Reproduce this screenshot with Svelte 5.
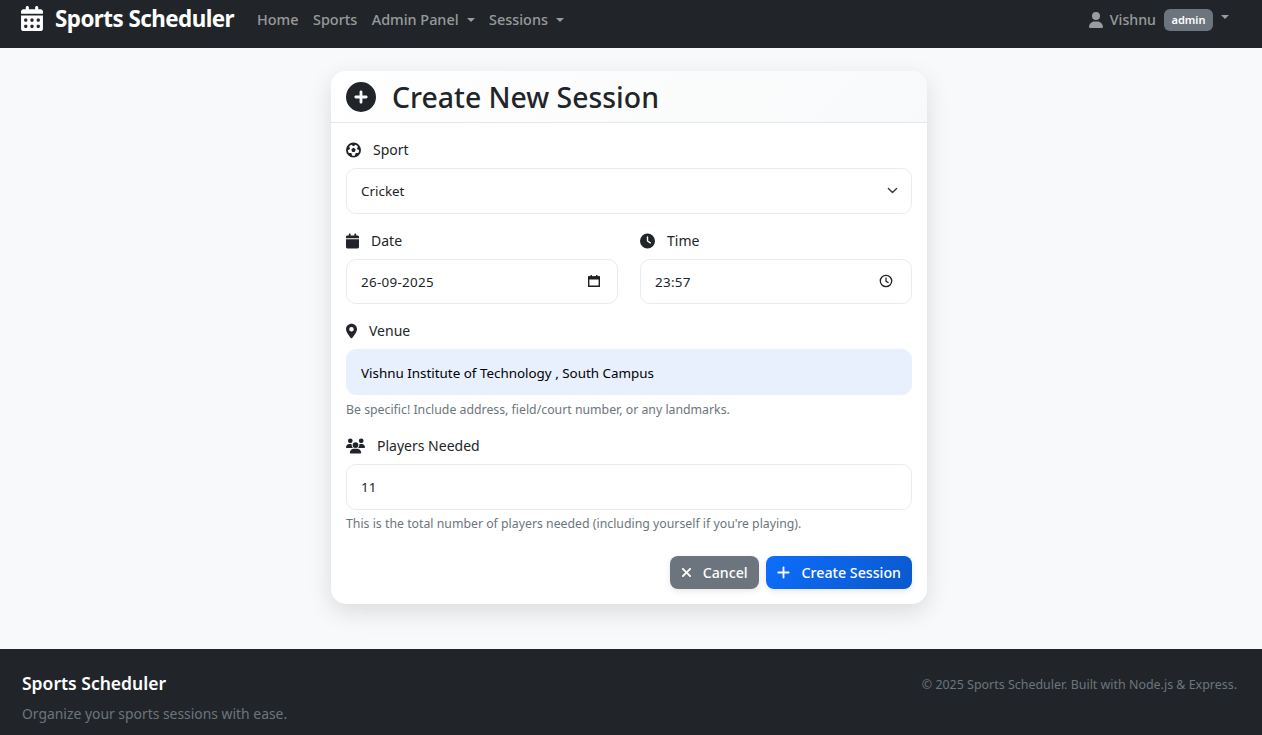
<script>
	let sport = $state('Cricket');
	let date = $state('26-09-2025');
	let time = $state('23:57');
	let venue = $state('Vishnu Institute of Technology , South Campus');
	let players = $state('11');

	const icons = {
		calendarDays: ['0 0 448 512', 'M128 0c17.7 0 32 14.3 32 32V64H288V32c0-17.7 14.3-32 32-32s32 14.3 32 32V64h48c26.5 0 48 21.5 48 48v48H0V112C0 85.5 21.5 64 48 64H96V32c0-17.7 14.3-32 32-32zM0 192H448V464c0 26.5-21.5 48-48 48H48c-26.5 0-48-21.5-48-48V192zm64 80v32c0 8.8 7.2 16 16 16h32c8.8 0 16-7.2 16-16V272c0-8.8-7.2-16-16-16H80c-8.8 0-16 7.2-16 16zm128 0v32c0 8.8 7.2 16 16 16h32c8.8 0 16-7.2 16-16V272c0-8.8-7.2-16-16-16H208c-8.8 0-16 7.2-16 16zm144-16c-8.8 0-16 7.2-16 16v32c0 8.8 7.2 16 16 16h32c8.8 0 16-7.2 16-16V272c0-8.8-7.2-16-16-16H336zM64 400v32c0 8.8 7.2 16 16 16h32c8.8 0 16-7.2 16-16V400c0-8.8-7.2-16-16-16H80c-8.8 0-16 7.2-16 16zm144-16c-8.8 0-16 7.2-16 16v32c0 8.8 7.2 16 16 16h32c8.8 0 16-7.2 16-16V400c0-8.8-7.2-16-16-16H208zm112 16v32c0 8.8 7.2 16 16 16h32c8.8 0 16-7.2 16-16V400c0-8.8-7.2-16-16-16H336c-8.8 0-16 7.2-16 16z'],
		calendar: ['0 0 448 512', 'M96 32V64H48C21.5 64 0 85.5 0 112v48H448V112c0-26.5-21.5-48-48-48H352V32c0-17.7-14.3-32-32-32s-32 14.3-32 32V64H160V32c0-17.7-14.3-32-32-32S96 14.3 96 32zM448 192H0V464c0 26.5 21.5 48 48 48H400c26.5 0 48-21.5 48-48V192z'],
		circlePlus: ['0 0 512 512', 'M256 512A256 256 0 1 0 256 0a256 256 0 1 0 0 512zM232 344V280H168c-13.3 0-24-10.7-24-24s10.7-24 24-24h64V168c0-13.3 10.7-24 24-24s24 10.7 24 24v64h64c13.3 0 24 10.7 24 24s-10.7 24-24 24H280v64c0 13.3-10.7 24-24 24s-24-10.7-24-24z'],
		user: ['0 0 448 512', 'M224 256A128 128 0 1 0 224 0a128 128 0 1 0 0 256zm-45.7 48C79.8 304 0 383.8 0 482.3C0 498.7 13.3 512 29.7 512H418.3c16.4 0 29.7-13.3 29.7-29.7C448 383.8 368.2 304 269.7 304H178.3z'],
		futbol: ['0 0 512 512', 'M417.3 360.1l-71.6-4.8c-5.2-.3-10.3 1.1-14.5 4.2s-7.2 7.4-8.4 12.5l-17.6 69.6C289.5 445.8 273 448 256 448s-33.5-2.2-49.2-6.4L189.2 372c-1.3-5-4.3-9.4-8.4-12.5s-9.3-4.5-14.5-4.2l-71.6 4.8c-17.6-27.2-28.5-59.2-30.4-93.6L125 228.3c4.4-2.8 7.6-7 9.2-11.9s1.4-10.2-.5-15l-26.7-66.6C128 109.2 155.3 89 186.7 76.9l55.2 46c4 3.3 9 5.1 14.1 5.1s10.2-1.8 14.1-5.1l55.2-46c31.3 12.1 58.7 32.3 79.6 57.9l-26.7 66.6c-1.9 4.8-2.1 10.1-.5 15s4.9 9.1 9.2 11.9l60.7 38.2c-1.9 34.4-12.8 66.4-30.4 93.6zM256 512A256 256 0 1 0 256 0a256 256 0 1 0 0 512zm14.1-325.7c-8.4-6.1-19.8-6.1-28.2 0L194 221c-8.4 6.1-11.9 16.9-8.7 26.8l18.3 56.3c3.2 9.9 12.4 16.6 22.8 16.6h59.2c10.4 0 19.6-6.7 22.8-16.6l18.3-56.3c3.2-9.9-.3-20.7-8.7-26.8l-47.9-34.8z'],
		clock: ['0 0 512 512', 'M256 0a256 256 0 1 1 0 512A256 256 0 1 1 256 0zM232 120V256c0 8 4 15.5 10.7 20l96 64c11 7.4 25.9 4.4 33.3-6.7s4.4-25.9-6.7-33.3L280 243.2V120c0-13.3-10.7-24-24-24s-24 10.7-24 24z'],
		pin: ['0 0 384 512', 'M215.7 499.2C267 435 384 279.4 384 192C384 86 298 0 192 0S0 86 0 192c0 87.4 117 243 168.3 307.2c12.3 15.3 35.1 15.3 47.4 0zM192 112a80 80 0 1 1 0 160 80 80 0 1 1 0-160z'],
		users: ['0 0 640 512', 'M144 0a80 80 0 1 1 0 160A80 80 0 1 1 144 0zM512 0a80 80 0 1 1 0 160A80 80 0 1 1 512 0zM0 298.7C0 239.8 47.8 192 106.7 192h42.7c15.9 0 31 3.5 44.6 9.7c-1.3 7.2-1.9 14.7-1.9 22.3c0 38.2 16.8 72.5 43.3 96c-.2 0-.4 0-.7 0H21.3C9.6 320 0 310.4 0 298.7zM405.3 320c-.2 0-.4 0-.7 0c26.6-23.5 43.3-57.8 43.3-96c0-7.6-.7-15-1.9-22.3c13.6-6.3 28.7-9.7 44.6-9.7h42.7C592.2 192 640 239.8 640 298.7c0 11.8-9.6 21.3-21.3 21.3H405.3zM224 224a96 96 0 1 1 192 0 96 96 0 1 1 -192 0zM128 485.3C128 411.7 187.7 352 261.3 352H378.7C452.3 352 512 411.7 512 485.3c0 14.7-11.9 26.7-26.7 26.7H154.7c-14.7 0-26.7-11.9-26.7-26.7z'],
		xmark: ['0 0 384 512', 'M342.6 150.6c12.5-12.5 12.5-32.8 0-45.3s-32.8-12.5-45.3 0L192 210.7 86.6 105.4c-12.5-12.5-32.8-12.5-45.3 0s-12.5 32.8 0 45.3L146.7 256 41.4 361.4c-12.5 12.5-12.5 32.8 0 45.3s32.8 12.5 45.3 0L192 301.3 297.4 406.6c12.5 12.5 32.8 12.5 45.3 0s12.5-32.8 0-45.3L237.3 256 342.6 150.6z'],
		plus: ['0 0 448 512', 'M256 80c0-17.7-14.3-32-32-32s-32 14.3-32 32V224H48c-17.7 0-32 14.3-32 32s14.3 32 32 32H192V432c0 17.7 14.3 32 32 32s32-14.3 32-32V288H400c17.7 0 32-14.3 32-32s-14.3-32-32-32H256V80z']
	};
</script>

{#snippet icon(name, cls)}
	<svg class="fa {cls}" viewBox={icons[name][0]} aria-hidden="true"><path fill="currentColor" d={icons[name][1]} /></svg>
{/snippet}

<nav class="navbar">
	<a class="brand" href="#top">{@render icon('calendarDays', 'brand-icon')}Sports Scheduler</a>
	<ul class="nav">
		<li><a href="#top">Home</a></li>
		<li><a href="#top">Sports</a></li>
		<li><a href="#top" class="caret">Admin Panel</a></li>
		<li><a href="#top" class="caret">Sessions</a></li>
	</ul>
	<a class="account caret" href="#top">
		{@render icon('user', 'user-icon')}Vishnu<span class="badge">admin</span>
	</a>
</nav>

<main>
	<section class="card">
		<header class="card-header">
			{@render icon('circlePlus', 'title-icon')}
			<h1>Create New Session</h1>
		</header>
		<form class="card-body" onsubmit={(e) => e.preventDefault()}>
			<div class="group">
				<label for="sport">{@render icon('futbol', 'li-sport')}Sport</label>
				<div class="control tall">
					<select id="sport" bind:value={sport}>
						<option>Cricket</option>
						<option>Football</option>
						<option>Tennis</option>
					</select>
					<svg class="chevron" viewBox="0 0 16 16" aria-hidden="true"><path fill="none" stroke="#343a40" stroke-linecap="round" stroke-linejoin="round" stroke-width="2" d="m2 5 6 6 6-6" /></svg>
				</div>
			</div>

			<div class="row">
				<div class="group">
					<label for="date">{@render icon('calendar', 'li-date')}Date</label>
					<div class="control">
						<input id="date" class="stamp" type="text" bind:value={date} />
						<svg class="picker" viewBox="0 0 14 14" aria-hidden="true">
							<path fill="none" stroke="#1f1f1f" stroke-width="1.4" d="M1.7 3h10.6v9.3H1.700z" />
							<path fill="#1f1f1f" d="M1 2.500h12v3H1zM3.500 1h1.400v2H3.500zM9.100 1h1.400v2H9.100z" />
						</svg>
					</div>
				</div>
				<div class="group">
					<label for="time">{@render icon('clock', 'li-time')}Time</label>
					<div class="control">
						<input id="time" class="stamp" type="text" bind:value={time} />
						<svg class="picker clock" viewBox="0 0 14 14" aria-hidden="true">
							<circle cx="7" cy="7" r="5.700" fill="none" stroke="#1f1f1f" stroke-width="1.300" />
							<path fill="none" stroke="#1f1f1f" stroke-width="1.200" d="M7 3.600V7.300l2.600 1.500" />
						</svg>
					</div>
				</div>
			</div>

			<div class="group venue">
				<label for="venue">{@render icon('pin', 'li-pin')}Venue</label>
				<div class="control tall filled">
					<input id="venue" type="text" bind:value={venue} />
				</div>
				<small>Be specific! Include address, field/court number, or any landmarks.</small>
			</div>

			<div class="group players">
				<label for="players">{@render icon('users', 'li-users')}Players Needed</label>
				<div class="control tall">
					<input id="players" type="text" bind:value={players} />
				</div>
				<small>This is the total number of players needed (including yourself if you're playing).</small>
			</div>

			<div class="actions">
				<button type="button" class="btn cancel">{@render icon('xmark', 'btn-x')}Cancel</button>
				<button type="submit" class="btn create">{@render icon('plus', 'btn-plus')}Create Session</button>
			</div>
		</form>
	</section>
</main>

<footer>
	<div>
		<h2>Sports Scheduler</h2>
		<p>Organize your sports sessions with ease.</p>
	</div>
	<p class="copy">© 2025 Sports Scheduler. Built with Node.js &amp; Express.</p>
</footer>

<style>
	:global(body) {
		margin: 0;
		background: #f8f9fa;
		color: #212529;
		font-family: 'Noto Sans', 'Open Sans', sans-serif;
		font-size: 16px;
		line-height: 1.5;
	}

	.fa {
		display: inline-block;
		flex: none;
	}

	a {
		text-decoration: none;
		color: inherit;
	}

	.navbar {
		display: flex;
		align-items: center;
		height: 48px;
		box-sizing: border-box;
		padding: 0 21px 10px;
		background: #212529;
		color: rgba(255, 255, 255, 0.55);
	}

	.brand {
		display: flex;
		align-items: center;
		font-size: 22.400px;
		font-weight: 700;
		color: #fff;
		margin-right: 23px;
		letter-spacing: -0.550px;
	}

	.brand-icon {
		width: 22px;
		height: 25px;
		margin-right: 12px;
	}

	.nav {
		display: flex;
		gap: 14.500px;
		list-style: none;
		margin: 0;
		padding: 1px 0 0;
		font-size: 14.400px;
		font-weight: 500;
	}

	.caret::after {
		content: '';
		display: inline-block;
		margin-left: 8px;
		vertical-align: 3px;
		border-top: 4.800px solid;
		border-right: 4.800px solid transparent;
		border-left: 4.800px solid transparent;
	}

	.account {
		display: flex;
		align-items: center;
		margin-left: auto;
		margin-right: 12px;
		padding-top: 1px;
		font-size: 14.200px;
		font-weight: 500;
	}

	.account.caret::after {
		margin-bottom: 5px;
	}

	.user-icon {
		width: 14px;
		height: 16px;
		margin-right: 7px;
	}

	.badge {
		margin-left: 8px;
		padding: 4px 7.500px;
		background: #6c757d;
		color: #fff;
		border-radius: 6px;
		font-size: 11px;
		font-weight: 600;
		line-height: 14px;
	}

	main {
		padding: 23px 4px 45px 0;
		display: flex;
		justify-content: center;
	}

	.card {
		width: 596px;
		background: #fff;
		border-radius: 15px;
		box-shadow: 0 8px 25px rgba(0, 0, 0, 0.12);
		overflow: hidden;
	}

	.card-header {
		display: flex;
		align-items: center;
		height: 51px;
		padding: 0 15px;
		background: linear-gradient(135deg, #fff, #f8f9fa);
		border-bottom: 1px solid #e4e6e8;
	}

	.title-icon {
		width: 30px;
		height: 30px;
		margin-right: 16px;
	}

	h1 {
		margin: 0;
		padding-top: 2px;
		font-size: 28.400px;
		font-weight: 500;
		line-height: 1.2;
	}

	.card-body {
		padding: 15px;
		display: flex;
		flex-direction: column;
		margin-top: -1px;
	}

	.group {
		display: flex;
		flex-direction: column;
		min-width: 0;
	}

	.row {
		display: grid;
		grid-template-columns: 1fr 1fr;
		gap: 22px;
		margin-top: 14px;
	}

	.venue {
		margin-top: 14px;
	}

	.players {
		margin-top: 13px;
	}

	label {
		display: flex;
		align-items: center;
		font-size: 14px;
		line-height: 24px;
		padding-top: 1px;
		margin-bottom: 6px;
	}

	label .fa {
		height: 16px;
	}

	.li-sport { width: 15px; margin-right: 12px; }
	.li-date { width: 13px; margin-right: 12px; }
	.li-time { width: 15px; margin-right: 12px; }
	.li-pin { width: 11px; margin-right: 12px; }
	.li-users { width: 19px; margin-right: 12px; }

	.control {
		position: relative;
		height: 45px;
		box-sizing: border-box;
		border: 1.500px solid #e9ecef;
		border-radius: 10px;
		background: #fff;
		display: flex;
		align-items: center;
	}

	.control.tall {
		height: 46px;
	}

	.control.filled {
		background: #e8f0fe;
		border-color: #e8f0fe;
	}

	input,
	select {
		width: 100%;
		height: 100%;
		box-sizing: border-box;
		border: 0;
		outline: 0;
		background: transparent;
		padding: 0 14px;
		font: inherit;
		font-size: 13.400px;
		color: #212529;
		appearance: none;
	}

	input.stamp {
		letter-spacing: 0.300px;
	}

	.filled input {
		padding-top: 1px;
		color: #000;
	}

	.chevron {
		position: absolute;
		right: 13px;
		top: 16px;
		width: 11px;
		height: 11px;
		pointer-events: none;
	}

	.picker {
		position: absolute;
		right: 16px;
		top: 14px;
		width: 14px;
		height: 14px;
		pointer-events: none;
	}

	.picker.clock {
		right: 18px;
	}

	small {
		margin-top: 4px;
		font-size: 12.300px;
		line-height: 21px;
		color: #6c757d;
	}

	.players small {
		margin-top: 3px;
	}

	.actions {
		display: flex;
		justify-content: flex-end;
		gap: 7px;
		margin-top: 22px;
	}

	.btn {
		display: inline-flex;
		align-items: center;
		height: 33px;
		border: 0;
		border-radius: 8px;
		padding: 0 11px;
		color: #fff;
		font: inherit;
		font-size: 14.200px;
		font-weight: 500;
		box-shadow: 0 2px 6px rgba(0, 0, 0, 0.1);
	}

	.cancel {
		background: #6c757d;
		padding: 0 11px 0 11.500px;
	}

	.create {
		background: linear-gradient(135deg, #0d6efd, #0a58ca);
	}

	.btn-x {
		width: 11px;
		height: 15px;
		margin-right: 10.500px;
	}

	.btn-plus {
		width: 13px;
		height: 15px;
		margin-right: 12px;
	}

	footer {
		display: flex;
		justify-content: space-between;
		height: 86px;
		box-sizing: border-box;
		padding: 20px 25px 0 22px;
		background: #212529;
		color: #6c757d;
	}

	h2 {
		margin: 0;
		font-size: 17.500px;
		font-weight: 600;
		line-height: 29px;
		color: #fff;
	}

	footer p {
		margin: 4px 0 0;
		font-size: 13.900px;
		line-height: 24px;
	}

	footer .copy {
		margin-top: 4px;
		font-size: 12.450px;
	}
</style>
